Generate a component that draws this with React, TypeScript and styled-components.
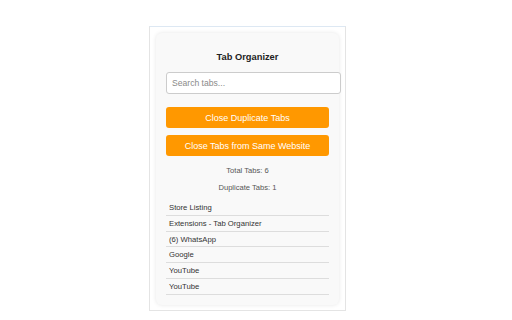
import React from "react";
import styled, { createGlobalStyle } from "styled-components";

const Global = createGlobalStyle`
  html, body { margin: 0; padding: 0; background: #ffffff; }
  body { font-family: "Liberation Sans", Arial, sans-serif; }
  * { box-sizing: border-box; }
`;

const Page = styled.div`
  width: 512px;
  height: 320px;
  padding: 26px 0 0 149px;
`;

const Frame = styled.div`
  width: 197px;
  height: 285px;
  border: 1px solid #e4e4e4;
  border-top-color: #dde8f3;
  background: #ffffff;
  padding: 6px 5px 5px 6px;
`;

const Card = styled.div`
  width: 183px;
  height: 272px;
  background: #f9f9f9;
  border-radius: 6px;
  box-shadow: 0 0 4px rgba(0, 0, 0, 0.1);
  padding: 10px 10px 9px 10px;
  display: flex;
  flex-direction: column;
`;

const Title = styled.h1`
  margin: 8px 0 9px;
  font-size: 9.3px;
  line-height: 12px;
  font-weight: bold;
  text-align: center;
  color: #222;
`;

const Search = styled.input`
  width: 175px;
  height: 22px;
  flex-shrink: 0;
  padding: 0 5px;
  border: 1px solid #cccccc;
  border-radius: 3px;
  background: #ffffff;
  font-family: "Liberation Sans", Arial, sans-serif;
  font-size: 8.6px;
  color: #333;
  outline: none;
  &::placeholder { color: #8a8a8a; }
`;

const Buttons = styled.div`
  display: flex;
  flex-direction: column;
  gap: 7px;
  margin-top: 13px;
`;

const Button = styled.button`
  width: 163px;
  height: 21px;
  border: none;
  border-radius: 3px;
  background: #ff9800;
  color: #ffffff;
  font-family: "Liberation Sans", Arial, sans-serif;
  font-size: 9px;
  padding: 0;
  cursor: pointer;
`;

const Stat = styled.p<{ $top: number }>`
  margin: ${(p) => p.$top}px 0 0;
  font-size: 7.6px;
  line-height: 10px;
  text-align: center;
  color: #555;
`;

const List = styled.ul`
  list-style: none;
  margin: 7px 0 0;
  padding: 0;
`;

const Item = styled.li`
  height: 15.8px;
  line-height: 15px;
  padding-left: 3px;
  border-bottom: 1px solid #dddddd;
  font-size: 7.7px;
  color: #333;
  white-space: nowrap;
  overflow: hidden;
`;

const tabs = [
  "Store Listing",
  "Extensions - Tab Organizer",
  "(6) WhatsApp",
  "Google",
  "YouTube",
  "YouTube",
];

export default function App() {
  return (
    <Page>
      <Global />
      <Frame>
        <Card>
          <Title>Tab Organizer</Title>
          <Search placeholder="Search tabs..." />
          <Buttons>
            <Button>Close Duplicate Tabs</Button>
            <Button>Close Tabs from Same Website</Button>
          </Buttons>
          <Stat $top={10}>Total Tabs: 6</Stat>
          <Stat $top={7}>Duplicate Tabs: 1</Stat>
          <List>
            {tabs.map((t, i) => (
              <Item key={i}>{t}</Item>
            ))}
          </List>
        </Card>
      </Frame>
    </Page>
  );
}
